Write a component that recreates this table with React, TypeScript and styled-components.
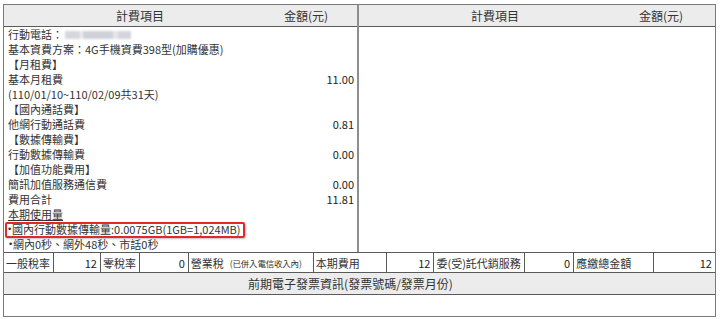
import styled, { createGlobalStyle } from "styled-components";

const GlobalStyle = createGlobalStyle`
  html, body {
    margin: 0;
    padding: 0;
    background: #fff;
  }
  body {
    font-family: "Noto Sans CJK TC", "Noto Sans", sans-serif;
    color: #333;
  }
`;

interface IBillRow {
  label: string;
  amount?: string;
}

const leftRows: IBillRow[] = [
  { label: "基本資費方案：4G手機資費398型(加購優惠)" },
  { label: "【月租費】" },
  { label: "基本月租費", amount: "11.00" },
  { label: "(110/01/10~110/02/09共31天)" },
  { label: "【國內通話費】" },
  { label: "他網行動通話費", amount: "0.81" },
  { label: "【數據傳輸費】" },
  { label: "行動數據傳輸費", amount: "0.00" },
  { label: "【加值功能費用】" },
  { label: "簡訊加值服務通信費", amount: "0.00" },
  { label: "費用合計", amount: "11.81" },
];

const taxCells = [
  { text: "一般稅率", width: 49 },
  { text: "12", width: 47, num: true },
  { text: "零稅率", width: 39 },
  { text: "0", width: 49, num: true },
  { text: "營業稅", note: "(已併入電信收入內)", width: 125 },
  { text: "本期費用", width: 73 },
  { text: "12", width: 48, num: true },
  { text: "委(受)託代銷服務", width: 91 },
  { text: "0", width: 49, num: true },
  { text: "應繳總金額", width: 80 },
  { text: "12", width: 62, num: true },
];

function PanelHeader() {
  return (
    <Header>
      <HeadCell>計費項目</HeadCell>
      <HeadCell>金額(元)</HeadCell>
    </Header>
  );
}

export default function App() {
  return (
    <>
      <GlobalStyle />
      <Page>
        <Table>
          <TopSection>
            <Panel $divider>
              <PanelHeader />
              <Body>
                <Row>
                  <Label>
                    行動電話：<Masked />
                  </Label>
                </Row>
                {leftRows.map((row, index) => (
                  <Row key={index}>
                    <Label>{row.label}</Label>
                    {row.amount && <Amount>{row.amount}</Amount>}
                  </Row>
                ))}
                <Row>
                  <Label $underline>本期使用量</Label>
                </Row>
                <Row>
                  <Highlight>
                    <Bullet>•</Bullet>國內行動數據傳輸量:0.0075GB(1GB=1,024MB)
                  </Highlight>
                </Row>
                <Row>
                  <Label>
                    <Bullet>•</Bullet>網內0秒、網外48秒、市話0秒
                  </Label>
                </Row>
              </Body>
            </Panel>
            <Panel>
              <PanelHeader />
              <Body />
            </Panel>
          </TopSection>
          <TaxRow>
            {taxCells.map((cell, index) => (
              <TaxCell key={index} $num={cell.num} style={{ width: cell.width }}>
                {cell.text}
                {cell.note && <TaxNote>{cell.note}</TaxNote>}
              </TaxCell>
            ))}
          </TaxRow>
          <InvoiceTitle>前期電子發票資訊(發票號碼/發票月份)</InvoiceTitle>
          <InvoiceBody />
        </Table>
      </Page>
    </>
  );
}

const Page = styled.div`
  padding: 4px 0 0 3px;
  width: 720px;
  height: 319px;
  box-sizing: border-box;
`;

const Table = styled.div`
  width: 713px;
  border: 1px solid #7a7a7a;
  box-sizing: border-box;
  display: flex;
  flex-direction: column;
`;

const TopSection = styled.div`
  display: grid;
  grid-template-columns: 355px 1fr;
`;

const Panel = styled.div<{ $divider?: boolean }>`
  display: flex;
  flex-direction: column;
  border-right: ${({ $divider }) => ($divider ? "2px solid #8e8e8e" : "none")};
`;

const Header = styled.div`
  display: grid;
  grid-template-columns: 272px 60px 1fr;
  height: 21px;
  align-items: center;
  background: #ececec;
  border-bottom: 1px solid #5a5a5a;
`;

const HeadCell = styled.span`
  text-align: center;
  font-size: 12px;
  color: #333;
  white-space: nowrap;
`;

const Body = styled.div`
  height: 225px;
  display: flex;
  flex-direction: column;
  padding: 0 3px 0 4px;
`;

const Row = styled.div`
  display: flex;
  justify-content: space-between;
  align-items: center;
  height: 15px;
  font-size: 11px;
  line-height: 15px;
  white-space: nowrap;
`;

const Label = styled.span<{ $underline?: boolean }>`
  display: flex;
  align-items: center;
  text-decoration: ${({ $underline }) => ($underline ? "underline" : "none")};
`;

const Amount = styled.span`
  font-size: 11px;
  color: #222;
`;

const Masked = styled.span`
  display: inline-block;
  width: 66px;
  height: 8px;
  margin-left: 2px;
  background: linear-gradient(
    90deg,
    #d6d6de 0 22%,
    #eceef2 22% 28%,
    #cfd1d9 28% 72%,
    #e4e6ea 72% 80%,
    #d3d5dc 80% 100%
  );
  filter: blur(1px);
`;

const Highlight = styled.span`
  display: inline-flex;
  align-items: center;
  height: 12px;
  margin-left: -3px;
  padding: 0 2px 0 0;
  border: 2px solid #e02a2a;
  border-radius: 2px;
  box-shadow: 1px 1px 2px rgba(0, 0, 0, 0.25);
`;

const Bullet = styled.span`
  font-family: "DejaVu Sans", sans-serif;
  font-size: 9px;
  width: 5px;
  text-align: left;
`;

const TaxRow = styled.div`
  display: flex;
  height: 20px;
  border-top: 1px solid #5a5a5a;
  box-sizing: border-box;
`;

const TaxCell = styled.div<{ $num?: boolean }>`
  display: flex;
  align-items: center;
  justify-content: ${({ $num }) => ($num ? "flex-end" : "flex-start")};
  gap: 6px;
  padding: 0 3px 0 2px;
  box-sizing: border-box;
  font-size: 11px;
  white-space: nowrap;
  border-left: 1px solid #5a5a5a;
  color: ${({ $num }) => ($num ? "#222" : "#333")};

  &:first-child {
    border-left: none;
  }
`;

const TaxNote = styled.span`
  font-size: 8.5px;
  letter-spacing: -0.2px;
`;

const InvoiceTitle = styled.div`
  height: 22px;
  display: flex;
  align-items: center;
  justify-content: center;
  padding-right: 18px;
  background: #ececec;
  border-top: 1px solid #5a5a5a;
  box-sizing: border-box;
  font-size: 12px;
  color: #333;
`;

const InvoiceBody = styled.div`
  height: 22px;
  border-top: 1px solid #5a5a5a;
  box-sizing: border-box;
`;
